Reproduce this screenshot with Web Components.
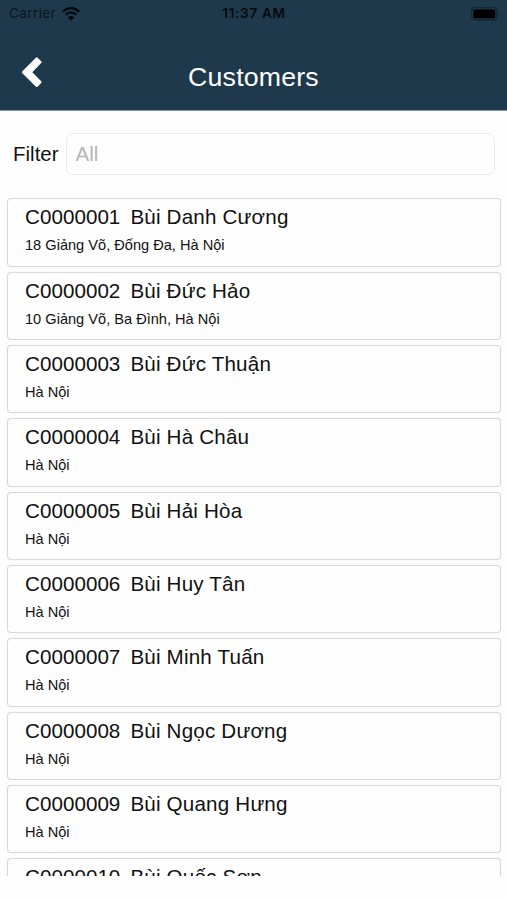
<!DOCTYPE html>
<html lang="vi">
<head>
<meta charset="utf-8">
<title>Customers</title>
<style>
html, body {
    margin: 0;
    height: 100%;
    overflow: hidden;
    background: #fefefe;
    font-family: "Liberation Sans", Arial, sans-serif;
}
</style>
</head>
<body>
<customer-app></customer-app>

<script>
function makeTemplate(html) {
    const template = document.createElement('template');
    template.innerHTML = html;
    return template;
}

class BaseElement extends HTMLElement {
    constructor() {
        super();
        this.attachShadow({mode: 'open'});
        this.shadowRoot.appendChild(this.constructor.template.content.cloneNode(true));
    }
}

class StatusBar extends BaseElement {
    static template = makeTemplate(`
<style>
:host {
    display: grid;
    grid-template-columns: 1fr auto 1fr;
    align-items: center;
    height: 27px;
    padding: 0 6px 0 9px;
    box-sizing: border-box;
    font: 13.5px/27px Inter, sans-serif;
    color: #04090d;
}
.left { display: flex; align-items: center; gap: 6px; }
.carrier { color: #0b151d; letter-spacing: 0.4px; }
.time { font-weight: 600; font-size: 13.6px; letter-spacing: 0.65px; margin-left: -2px; }
.battery { justify-self: end; }
svg { display: block; }
</style>
<div class="left">
    <span class="carrier">Carrier</span>
    <svg width="18" height="14" viewBox="0 0 18 14">
        <path d="M.8 4.7Q9-2.7 17.2 4.7" fill="none" stroke="currentColor" stroke-width="2.3"></path>
        <path d="M3.7 7.8Q9 3.1 14.3 7.8" fill="none" stroke="currentColor" stroke-width="2.2"></path>
        <path d="M9 13.5 5.9 10.4Q9 7.8 12.1 10.4Z" fill="currentColor"></path>
    </svg>
</div>
<span class="time"><slot></slot></span>
<svg class="battery" width="30" height="14" viewBox="0 0 30 14">
    <rect x=".7" y=".7" width="25" height="12.2" rx="3" fill="none" stroke="#142734" stroke-width="1.2"></rect>
    <rect x="2.4" y="2.4" width="21.8" height="8.8" rx="1.5" fill="#000"></rect>
    <path d="M27.4 4.8q2 2 0 4z" fill="#142734"></path>
</svg>`);
}

class NavBar extends BaseElement {
    static template = makeTemplate(`
<style>
:host {
    display: grid;
    grid-template-columns: 60px 1fr 60px;
    align-items: center;
    height: 83px;
    color: #fff;
}
button {
    margin: 0 0 0 21px;
    padding: 29px 0 0;
    border: 0;
    background: none;
    justify-self: start;
    align-self: start;
    color: inherit;
}
svg { display: block; }
h1 {
    margin: 17px 0 0;
    font-size: 26.7px;
    font-weight: 400;
    line-height: 32px;
    letter-spacing: 0.2px;
    text-align: center;
}
</style>
<button aria-label="Back">
    <svg width="22" height="33" viewBox="0 0 22 33">
        <path d="M16.6 1.7 20.2 5.3Q21.1 6.2 20.2 7.1L11.3 16.2 20.2 25.2Q21.1 26.1 20.2 27L16.6 30.7Q15.8 31.5 14.9 30.7L1.4 17.2Q.5 16.2 1.4 15.3L14.9 1.7Q15.8.9 16.6 1.7Z" fill="currentColor"></path>
    </svg>
</button>
<h1><slot></slot></h1>`);
}

class FilterBar extends BaseElement {
    static template = makeTemplate(`
<style>
:host {
    display: flex;
    align-items: center;
    gap: 7px;
    padding: 22px 12px 24px 13px;
}
label {
    font-size: 20.5px;
    color: #111;
}
input {
    flex: 1;
    min-width: 0;
    height: 42px;
    box-sizing: border-box;
    padding: 0 9px;
    border: 1px solid #ebebeb;
    border-radius: 7px;
    background: #fefefe;
    font: inherit;
    font-size: 20.5px;
    outline: none;
}
input::placeholder { color: #b5b5b5; opacity: 1; }
</style>
<label for="filter">Filter</label>
<input id="filter" type="text" placeholder="All">`);
}

class CustomerCard extends BaseElement {
    static template = makeTemplate(`
<style>
:host {
    display: block;
    flex: none;
    height: 68.3px;
    box-sizing: border-box;
    padding: 5px 17px 0;
    border: 1px solid #d9d9d9;
    border-radius: 4px;
    background: #fefefe;
    box-shadow: 0 0 1px #ddd;
    color: #111;
}
.title {
    display: flex;
    gap: 10px;
    font-size: 20.6px;
    line-height: 26px;
    letter-spacing: 0.04px;
    white-space: nowrap;
}
slot[name="name"] { letter-spacing: 0.19px; }
.address {
    margin-top: 6px;
    font-size: 14.6px;
    line-height: 18px;
}
</style>
<div class="title">
    <slot name="code"></slot>
    <slot name="name"></slot>
</div>
<div class="address"><slot></slot></div>`);
}

class CustomerApp extends BaseElement {
    static template = makeTemplate(`
<style>
:host {
    display: flex;
    flex-direction: column;
    height: 876px;
    overflow: hidden;
}
header {
    background: #1e394c;
    border-bottom: 1px solid #8494a0;
}
.list {
    display: flex;
    flex-direction: column;
    gap: 5.05px;
    flex: 1;
    min-height: 0;
    overflow: hidden;
    padding: 0 6px 0 7px;
    margin-top: -1px;
    padding-top: 0.4px;
}
</style>
<header>
    <status-bar>11:37 AM</status-bar>
    <nav-bar>Customers</nav-bar>
</header>
<filter-bar></filter-bar>
<div class="list"></div>`);

    connectedCallback() {
        const customers = [
            ['C0000001', 'Bùi Danh Cương', '18 Giảng Võ, Đống Đa, Hà Nội'],
            ['C0000002', 'Bùi Đức Hảo', '10 Giảng Võ, Ba Đình, Hà Nội'],
            ['C0000003', 'Bùi Đức Thuận', 'Hà Nội'],
            ['C0000004', 'Bùi Hà Châu', 'Hà Nội'],
            ['C0000005', 'Bùi Hải Hòa', 'Hà Nội'],
            ['C0000006', 'Bùi Huy Tân', 'Hà Nội'],
            ['C0000007', 'Bùi Minh Tuấn', 'Hà Nội'],
            ['C0000008', 'Bùi Ngọc Dương', 'Hà Nội'],
            ['C0000009', 'Bùi Quang Hưng', 'Hà Nội'],
            ['C0000010', 'Bùi Quốc Sơn', '']
        ];
        const list = this.shadowRoot.querySelector('.list');
        for (const [code, name, address] of customers) {
            const card = document.createElement('customer-card');
            card.innerHTML = `<span slot="code">${code}</span><span slot="name">${name}</span>${address}`;
            list.appendChild(card);
        }
    }
}

window.customElements.define('status-bar', StatusBar);
window.customElements.define('nav-bar', NavBar);
window.customElements.define('filter-bar', FilterBar);
window.customElements.define('customer-card', CustomerCard);
window.customElements.define('customer-app', CustomerApp);
</script>
</body>
</html>
